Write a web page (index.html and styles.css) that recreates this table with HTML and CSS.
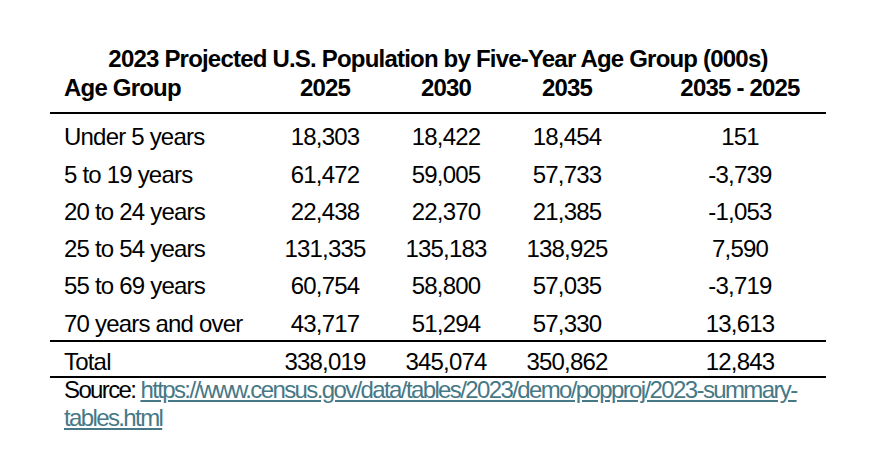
FILE: index.html
```html
<!DOCTYPE html>
<html>
<head>
<meta charset="utf-8">
<link rel="stylesheet" href="styles.css">
</head>
<body>
<div class="wrap">
  <div class="title">2023 Projected U.S. Population by Five-Year Age Group (000s)</div>
  <table class="pop">
    <colgroup>
      <col class="c1"><col class="c2"><col class="c3"><col class="c4"><col class="c5">
    </colgroup>
    <thead>
      <tr><th class="lbl">Age Group</th><th>2025</th><th>2030</th><th>2035</th><th class="diff">2035 - 2025</th></tr>
    </thead>
    <tbody>
      <tr class="first"><td class="lbl">Under 5 years</td><td>18,303</td><td>18,422</td><td>18,454</td><td class="diff">151</td></tr>
      <tr><td class="lbl">5 to 19 years</td><td>61,472</td><td>59,005</td><td>57,733</td><td class="diff">-3,739</td></tr>
      <tr><td class="lbl">20 to 24 years</td><td>22,438</td><td>22,370</td><td>21,385</td><td class="diff">-1,053</td></tr>
      <tr><td class="lbl">25 to 54 years</td><td>131,335</td><td>135,183</td><td>138,925</td><td class="diff">7,590</td></tr>
      <tr><td class="lbl">55 to 69 years</td><td>60,754</td><td>58,800</td><td>57,035</td><td class="diff">-3,719</td></tr>
      <tr><td class="lbl">70 years and over</td><td>43,717</td><td>51,294</td><td>57,330</td><td class="diff">13,613</td></tr>
      <tr class="total"><td class="lbl">Total</td><td>338,019</td><td>345,074</td><td>350,862</td><td class="diff">12,843</td></tr>
    </tbody>
  </table>
  <p class="source">Source: <a href="#">https://www.census.gov/data/tables/2023/demo/popproj/2023-summary-<br>tables.html</a></p>
</div>
</body>
</html>
```

FILE: styles.css
```css
html, body {
  margin: 0;
  padding: 0;
  background: #ffffff;
}

body {
  font-family: "Liberation Sans", Arial, sans-serif;
  color: #000000;
  font-size: 24px;
  letter-spacing: -0.8px;
}

.wrap {
  width: 776px;
  margin-left: 50px;
  padding-top: 45px;
}

.title {
  font-weight: bold;
  text-align: center;
  line-height: 28px;
}

.pop {
  width: 776px;
  table-layout: fixed;
  border-collapse: collapse;
  border-spacing: 0;
}

.c1 { width: 215px; }
.c2 { width: 120px; }
.c3 { width: 122px; }
.c4 { width: 120px; }
.c5 { width: 199px; }

.pop th,
.pop td {
  padding: 0;
  text-align: center;
  line-height: 28px;
  white-space: nowrap;
  font-size: 24px;
}

.pop th {
  font-weight: bold;
  padding-top: 1px;
  padding-bottom: 10px;
  border-bottom: 2px solid #000;
}

.pop td {
  padding-top: 7.3px;
  padding-bottom: 2px;
}

.pop .lbl {
  text-align: left;
  padding-left: 14px;
}

.pop .diff {
  padding-left: 27px;
}

.pop tr.first td {
  padding-top: 9.3px;
}

.pop tr.total td {
  border-top: 2px solid #000;
  border-bottom: 2px solid #000;
  padding-top: 6px;
  padding-bottom: 0;
}

.source {
  margin: -2px 0 0 0;
  padding-left: 14px;
  line-height: 28px;
  white-space: nowrap;
  letter-spacing: -1.62px;
}

.source a {
  color: #467886;
  text-decoration: underline;
}
```
